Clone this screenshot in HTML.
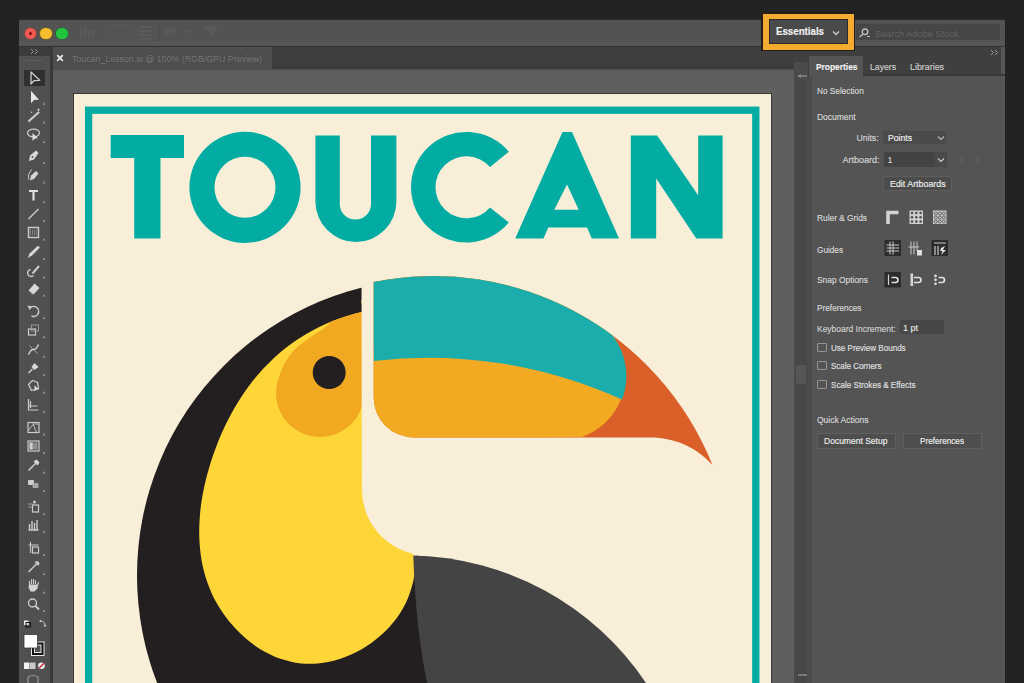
<!DOCTYPE html>
<html><head><meta charset="utf-8">
<style>
*{margin:0;padding:0;box-sizing:border-box}
html,body{width:1024px;height:683px;overflow:hidden;background:#212423;font-family:"Liberation Sans",sans-serif}
.a{position:absolute}
.tl{position:absolute;border-radius:50%}
.t{position:absolute;white-space:nowrap;line-height:1;-webkit-text-stroke:0.2px currentColor;text-shadow:0 0 1px rgba(0,0,0,.35)}
</style></head>
<body>
<div class="a" style="left:19px;top:19px;width:986px;height:664px;background:#535353;"></div>
<div class="a" style="left:19px;top:19px;width:986px;height:1px;background:#2b2b2b;"></div>
<div class="a" style="left:19px;top:41px;width:986px;height:4px;background:#575757;"></div>
<div class="a" style="left:19px;top:45.5px;width:986px;height:1.5px;background:#333333;"></div>
<div class="tl" style="left:24.5px;top:27.5px;width:11.5px;height:11.5px;background:#ee5a52;box-shadow:0 0 0 0.6px #a33a35"></div>
<div class="tl" style="left:28.5px;top:31.5px;width:3.5px;height:3.5px;background:#7b0a0a"></div>
<div class="tl" style="left:40.2px;top:27.5px;width:11.5px;height:11.5px;background:#f6bd30;box-shadow:0 0 0 0.6px #8e6a1a"></div>
<div class="tl" style="left:56px;top:27.5px;width:11.5px;height:11.5px;background:#23c43e;box-shadow:0 0 0 0.6px #1a7a2a"></div>
<svg class="a" style="left:0;top:0" width="240" height="46"><path d="M81,26 V38 M85,26 V38 M89,30 V38 M93,30 V38 M81,31 H95" stroke="#595959" stroke-width="2"/><rect x="112" y="25" width="16" height="13" fill="none" stroke="#595959" stroke-width="1.2"/><path d="M139,27 H152 M139,31 H152 M139,35 H152 M139,38.5 H152" stroke="#5a5a5a" stroke-width="2"/><path d="M158.5,24 V41" stroke="#4b4b4b" stroke-width="1.2"/><ellipse cx="170" cy="31" rx="6" ry="4.5" fill="#595959"/><path d="M184,31.5 H191" stroke="#595959" stroke-width="1.5"/><path d="M203,27 L218,25 L212,38 L210,32 Z" fill="#595959"/></svg>
<div class="a" style="left:19px;top:47px;width:986px;height:22px;background:#3f3f3f;"></div>
<div class="a" style="left:52px;top:47px;width:220px;height:22px;background:#4e4e4e;"></div>
<div class="a" style="left:272px;top:65.5px;width:536px;height:3.5px;background:#3a3a3a;"></div>
<svg class="a" style="left:56px;top:54px" width="8" height="8"><path d="M1.2,1.2 L6.8,6.8 M6.8,1.2 L1.2,6.8" stroke="#e8e8e8" stroke-width="1.8"/></svg>
<div class="a" style="left:19px;top:47px;width:31px;height:636px;background:#505050;"></div>
<div class="a" style="left:19px;top:47px;width:31px;height:9px;background:#3c3c3c;"></div>
<svg class="a" style="left:30px;top:48px" width="10" height="7"><path d="M1,1 L3.5,3.5 L1,6 M5,1 L7.5,3.5 L5,6" fill="none" stroke="#9a9a9a" stroke-width="1"/></svg>
<div class="a" style="left:26px;top:60px;width:17px;height:1px;background:#5c5c5c;"></div>
<div class="a" style="left:50px;top:47px;width:2.5px;height:636px;background:#393939;"></div>
<div class="a" style="left:52.5px;top:69px;width:741.5px;height:614px;background:#5f5f5f;"></div>
<div class="a" style="left:52.5px;top:69px;width:741.5px;height:2px;background:#555555;"></div>
<div class="a" style="left:73px;top:93px;width:699px;height:600px;background:#3d3a36;"></div>
<div class="a" style="left:74px;top:94px;width:696.8px;height:600px;background:#f9efd9;"></div>
<div class="a" style="left:794px;top:62px;width:14px;height:621px;background:#4a4a4a;"></div>
<div class="a" style="left:796px;top:80px;width:10px;height:603px;background:#474747;"></div>
<div class="a" style="left:796px;top:365px;width:10px;height:19px;background:#565656;border-radius:2px"></div>
<svg class="a" style="left:797px;top:73px" width="11" height="6"><path d="M1,3 H10" stroke="#8a8a8a" stroke-width="1.5"/><path d="M1,3 L4,1 L4,5 Z" fill="#8a8a8a"/></svg>
<svg class="a" style="left:797px;top:672px" width="11" height="6"><path d="M1,3 H10" stroke="#8a8a8a" stroke-width="1.5"/></svg>
<div class="a" style="left:808px;top:47px;width:197px;height:636px;background:#545454;"></div>
<div class="a" style="left:808px;top:47px;width:197px;height:29px;background:#3f3f3f;"></div>
<div class="a" style="left:808px;top:76px;width:4px;height:607px;background:#4b4b4b;"></div>
<div class="a" style="left:1000.5px;top:47px;width:4.5px;height:636px;background:#565656;"></div>
<div class="a" style="left:808px;top:73.5px;width:197px;height:2px;background:#393939;"></div>
<div class="a" style="left:809px;top:56px;width:54px;height:20px;background:#545454;"></div>
<svg class="a" style="left:990px;top:49px" width="10" height="7"><path d="M1,1 L3.5,3.5 L1,6 M5,1 L7.5,3.5 L5,6" fill="none" stroke="#9a9a9a" stroke-width="1"/></svg>
<div class="a" style="left:1005px;top:19px;width:19px;height:664px;background:#212423;"></div>
<div class="a" style="left:24px;top:70px;width:20.5px;height:15.5px;background:#2f2f2f"></div>
<svg class="a" style="left:0;top:0" width="60" height="683"><g transform="translate(33.5 77.5)"><path d="M-2.5,-5.5 L-2.5,6.5 L0.5,3.2 L6.2,2.8 Z" fill="none" stroke="#cbcbcb" stroke-width="1.3" stroke-linejoin="round"/></g><g transform="translate(33.5 96.8)"><path d="M-2.5,-6 L-2.5,6.5 L0.5,3.3 L5.5,3 Z" fill="#e6e6e6"/></g><path d="M42.5,104.8 L45,104.8 L45,102.3 Z" fill="#9a9a9a"/><g transform="translate(33.5 115.5)"><path d="M-4.5,5.5 L5,-3" stroke="#cbcbcb" stroke-width="2.2" stroke-linecap="round"/><path d="M-2.5,-4 L-1.5,-2.5 M5,-7 L5,-4.5 M3.8,-5.8 L6.2,-5.8" stroke="#cbcbcb" stroke-width="1"/></g><path d="M42.5,123.5 L45,123.5 L45,121.0 Z" fill="#9a9a9a"/><g transform="translate(33.5 135)"><ellipse cx="0" cy="-2" rx="6" ry="3.8" fill="none" stroke="#cbcbcb" stroke-width="1.3"/><path d="M-1,-2 L-1,6 L1.5,3.5 L4.5,3.3 Z" fill="#e0e0e0"/></g><path d="M42.5,143 L45,143 L45,140.5 Z" fill="#9a9a9a"/><g transform="translate(33.5 156)"><path d="M-4.5,5 L-3.5,-0.5 L2.5,-5.5 L5,-3 L0.5,3.5 Z" fill="#dadada"/><circle cx="-1" cy="1" r="1" fill="#535353"/></g><path d="M42.5,164 L45,164 L45,161.5 Z" fill="#9a9a9a"/><g transform="translate(33.5 175.5)"><path d="M-3.5,5 L-2.5,0 L2.5,-4.5 L5,-2 L0.5,3.5 Z" fill="#d6d6d6"/><path d="M-5,4 Q-6,-2 -2,-6" fill="none" stroke="#cbcbcb" stroke-width="1"/></g><path d="M42.5,183.5 L45,183.5 L45,181.0 Z" fill="#9a9a9a"/><g transform="translate(33.5 195)"><path d="M-4.5,-5 H4.5 V-3 H1.1 V5.5 H-1.1 V-3 H-4.5 Z" fill="#e0e0e0"/></g><path d="M42.5,203 L45,203 L45,200.5 Z" fill="#9a9a9a"/><g transform="translate(33.5 214)"><path d="M-5,5 L5,-5" stroke="#cbcbcb" stroke-width="1.4"/></g><path d="M42.5,222 L45,222 L45,219.5 Z" fill="#9a9a9a"/><g transform="translate(33.5 232.5)"><rect x="-5" y="-5" width="10" height="10" fill="none" stroke="#cbcbcb" stroke-width="1.4"/><path d="M-3,-3 V3 M-1,-3 V3 M1,-3 V3 M3,-3 V3" stroke="#8a8a8a" stroke-width="0.8"/></g><path d="M42.5,240.5 L45,240.5 L45,238.0 Z" fill="#9a9a9a"/><g transform="translate(33.5 252)"><path d="M-5.5,6 L-4.2,1.8 L3.5,-5.5 Q5.8,-6.8 6.2,-4.3 L-1.2,3.2 Z" fill="#d6d6d6"/></g><path d="M42.5,260 L45,260 L45,257.5 Z" fill="#9a9a9a"/><g transform="translate(33.5 270.5)"><path d="M-3,-1 A3.5,3.5 0 1 0 0,5" fill="none" stroke="#cbcbcb" stroke-width="1.4"/><path d="M-1,3 L5.5,-4.5" stroke="#cbcbcb" stroke-width="2"/></g><path d="M42.5,278.5 L45,278.5 L45,276.0 Z" fill="#9a9a9a"/><g transform="translate(33.5 288.5)"><path d="M-5,2 L1,-5 L6,-0.5 L0,6 Z" fill="#d8d8d8"/><path d="M-5,2 L0,6 L-2,6 Z" fill="#777"/></g><path d="M42.5,296.5 L45,296.5 L45,294.0 Z" fill="#9a9a9a"/><g transform="translate(33.5 311)"><path d="M-3.5,-3 A5,5 0 1 1 -2,5" fill="none" stroke="#cbcbcb" stroke-width="1.5"/><path d="M-6,-5.5 L-1,-4.5 L-4,-1 Z" fill="#cbcbcb"/></g><path d="M42.5,319 L45,319 L45,316.5 Z" fill="#9a9a9a"/><g transform="translate(33.5 330)"><rect x="-5" y="-1" width="7" height="6" fill="none" stroke="#cbcbcb" stroke-width="1.2"/><rect x="-2" y="-5" width="7" height="6" fill="none" stroke="#9a9a9a" stroke-width="1"/></g><path d="M42.5,338 L45,338 L45,335.5 Z" fill="#9a9a9a"/><g transform="translate(33.5 349.5)"><path d="M-5,5 Q-2,-1 0,0 Q2,1 5,-5" fill="none" stroke="#cbcbcb" stroke-width="1.6"/><path d="M-4,-4 L-1,-1 M4,4 L1,1" stroke="#aaa" stroke-width="1"/></g><path d="M42.5,357.5 L45,357.5 L45,355.0 Z" fill="#9a9a9a"/><g transform="translate(33.5 368)"><path d="M-5,5 L-1,1" stroke="#cbcbcb" stroke-width="1.4"/><path d="M-2,-1 L1,-5 L5,-1 L1,2 Z" fill="#d8d8d8"/></g><path d="M42.5,376 L45,376 L45,373.5 Z" fill="#9a9a9a"/><g transform="translate(33.5 385.5)"><path d="M-5,-1 L-1,-5 L4,-3 L5,3 L-2,5 Z" fill="none" stroke="#cbcbcb" stroke-width="1.3"/><path d="M1,0 L1,6 L3,4 L5.5,4 Z" fill="#e0e0e0"/></g><path d="M42.5,393.5 L45,393.5 L45,391.0 Z" fill="#9a9a9a"/><g transform="translate(33.5 405)"><path d="M-5,-6 V5 H5 M-3,-4 V3 M-5,1 L4,1" fill="none" stroke="#cbcbcb" stroke-width="1.2"/></g><path d="M42.5,413 L45,413 L45,410.5 Z" fill="#9a9a9a"/><g transform="translate(33.5 427.5)"><rect x="-5.5" y="-5" width="11" height="10" fill="none" stroke="#cbcbcb" stroke-width="1.2"/><path d="M-5,3 Q0,-6 5,-3 M-1,-5 L3,5" fill="none" stroke="#bdbdbd" stroke-width="1"/></g><path d="M42.5,435.5 L45,435.5 L45,433.0 Z" fill="#9a9a9a"/><g transform="translate(33.5 446)"><rect x="-5.5" y="-5" width="11" height="10" fill="none" stroke="#cbcbcb" stroke-width="1.2"/><rect x="-4" y="-3.5" width="8" height="7" fill="#8d8d8d"/><rect x="-4" y="-3.5" width="3" height="7" fill="#cfcfcf"/></g><path d="M42.5,454 L45,454 L45,451.5 Z" fill="#9a9a9a"/><g transform="translate(33.5 465.5)"><path d="M-5,5 L2,-2" stroke="#cbcbcb" stroke-width="1.6"/><path d="M0,-4 L3,-6 L6,-3 L4,0 Z" fill="#d8d8d8"/></g><path d="M42.5,473.5 L45,473.5 L45,471.0 Z" fill="#9a9a9a"/><g transform="translate(33.5 484)"><rect x="-5.5" y="-4" width="6" height="5" rx="1" fill="#cfcfcf"/><rect x="-1" y="-1" width="6" height="5" rx="1" fill="#a8a8a8"/></g><path d="M42.5,492 L45,492 L45,489.5 Z" fill="#9a9a9a"/><g transform="translate(33.5 507)"><path d="M-5,-3 L-1,-3 M-5,0 L-2,0" stroke="#aaa" stroke-width="1"/><rect x="-1" y="-2" width="6" height="7" fill="none" stroke="#cbcbcb" stroke-width="1.2"/><circle cx="1" cy="-5" r="1.5" fill="#ccc"/></g><path d="M42.5,515 L45,515 L45,512.5 Z" fill="#9a9a9a"/><g transform="translate(33.5 525)"><path d="M-5,5 H5 M-4,5 V-1 M-1.5,5 V-4 M1,5 V-2 M3.5,5 V-5" stroke="#cbcbcb" stroke-width="1.4"/></g><path d="M42.5,533 L45,533 L45,530.5 Z" fill="#9a9a9a"/><g transform="translate(33.5 548)"><path d="M-5,-3 H5 M-3,-6 V5" stroke="#cbcbcb" stroke-width="1.1"/><rect x="-1" y="-1" width="6" height="6" fill="none" stroke="#cbcbcb" stroke-width="1.2"/></g><path d="M42.5,556 L45,556 L45,553.5 Z" fill="#9a9a9a"/><g transform="translate(33.5 567)"><path d="M-5,5 L3,-3" stroke="#cbcbcb" stroke-width="1.6"/><path d="M1,-5 L4,-6 L6,-4 L5,-1 Z" fill="#d0d0d0"/></g><path d="M42.5,575 L45,575 L45,572.5 Z" fill="#9a9a9a"/><g transform="translate(33.5 585.5)"><path d="M-4,-1 L-4,-4 M-2,-2 L-2,-6 M0,-2 L0,-6 M2,-2 L2,-5 M4,0 L5,-3" stroke="#cbcbcb" stroke-width="1.2" stroke-linecap="round"/><path d="M-4.5,-1 L4.5,-1 L4,3 L1,6 L-3,6 L-5,2 Z" fill="#d4d4d4"/></g><path d="M42.5,593.5 L45,593.5 L45,591.0 Z" fill="#9a9a9a"/><g transform="translate(33.5 604)"><circle cx="-1" cy="-1" r="4" fill="none" stroke="#cbcbcb" stroke-width="1.4"/><path d="M2,2 L5.5,5.5" stroke="#cbcbcb" stroke-width="2"/></g><path d="M42.5,612 L45,612 L45,609.5 Z" fill="#9a9a9a"/><rect x="24" y="620.5" width="4.5" height="4.5" fill="#eee"/><rect x="26" y="622.5" width="4.5" height="4.5" fill="none" stroke="#111" stroke-width="1"/><path d="M40,621 Q45,621 45,626" fill="none" stroke="#c8c8c8" stroke-width="1"/><path d="M39,621 L41,619.5 L41,622.5Z M45,627 L43.5,625 L46.5,625Z" fill="#c8c8c8"/><rect x="31.5" y="642" width="12.5" height="13.5" fill="#111" stroke="#e8e8e8" stroke-width="1"/><rect x="34.5" y="645" width="6.5" height="7.5" fill="#535353" stroke="#e8e8e8" stroke-width="1"/><rect x="24" y="634.5" width="13.5" height="13.5" fill="#ffffff" stroke="#3a3a3a" stroke-width="0.8"/><rect x="24" y="662.5" width="5.5" height="6.5" fill="#f2f2f2"/><rect x="30" y="662.5" width="5.5" height="6.5" fill="#c9c9c9"/><circle cx="41.5" cy="665.7" r="3.3" fill="#f5f5f5"/><path d="M39.2,668 L43.8,663.4" stroke="#d62a2a" stroke-width="1.5"/><path d="M28,683 L28,677 Q33,674 38,677 L38,683" fill="none" stroke="#9a9a9a" stroke-width="1.2"/></svg>
<!-- artwork -->
<svg class="a" style="left:0;top:0" width="1024" height="683" viewBox="0 0 1024 683">
<defs>
<clipPath id="ab"><rect x="74" y="94" width="696.8" height="600"/></clipPath>
<clipPath id="yc"><path id="ypath" d="M362.6,311.7 C360.6,312.2 354.4,313.7 350.5,314.9 C346.6,316.1 342.7,317.3 338.9,318.7 C335.1,320.1 331.4,321.4 327.8,323.0 C324.2,324.6 320.6,326.2 317.2,328.0 C313.8,329.8 310.4,331.6 307.1,333.5 C303.8,335.4 300.5,337.4 297.4,339.5 C294.2,341.6 291.2,343.8 288.2,346.1 C285.2,348.4 282.3,350.7 279.5,353.1 C276.7,355.5 273.9,358.1 271.2,360.7 C268.5,363.3 265.9,365.9 263.4,368.6 C260.9,371.3 258.4,374.1 256.0,377.0 C253.6,379.9 251.3,382.8 249.1,385.8 C246.9,388.8 244.7,391.9 242.6,395.0 C240.5,398.1 238.5,401.3 236.6,404.5 C234.7,407.7 232.7,411.0 230.9,414.4 C229.1,417.8 227.4,421.2 225.7,424.6 C224.0,428.1 222.4,431.6 220.9,435.1 C219.4,438.7 217.9,442.2 216.5,445.9 C215.1,449.5 213.8,453.3 212.5,457.0 C211.2,460.7 210.1,464.4 209.0,468.2 C207.9,472.0 206.8,475.8 205.9,479.6 C205.0,483.4 204.1,487.3 203.3,491.2 C202.5,495.1 201.9,498.9 201.3,502.8 C200.8,506.7 200.3,510.5 200.0,514.4 C199.7,518.3 199.4,522.2 199.3,526.1 C199.2,530.0 199.2,533.8 199.3,537.6 C199.4,541.4 199.7,545.3 200.1,549.1 C200.5,552.9 200.9,556.7 201.6,560.4 C202.2,564.1 203.1,567.9 204.0,571.5 C204.9,575.1 206.1,578.7 207.3,582.3 C208.6,585.9 209.9,589.4 211.5,592.9 C213.1,596.4 214.8,599.8 216.7,603.1 C218.6,606.4 220.6,609.6 222.8,612.8 C225.0,616.0 227.3,619.1 229.7,622.1 C232.1,625.1 234.7,627.9 237.4,630.6 C240.1,633.3 242.9,635.9 245.8,638.4 C248.7,640.9 251.7,643.2 254.8,645.4 C257.9,647.6 261.1,649.6 264.3,651.4 C267.6,653.2 270.9,654.9 274.3,656.4 C277.7,657.9 281.3,659.0 284.8,660.1 C288.3,661.2 291.9,662.1 295.5,662.7 C299.1,663.3 302.9,663.7 306.6,663.8 C310.3,663.9 314.1,663.8 317.8,663.5 C321.6,663.2 325.4,662.6 329.1,661.8 C332.9,661.0 336.6,660.0 340.3,658.8 C344.0,657.6 347.6,656.1 351.2,654.5 C354.8,652.9 358.3,651.2 361.7,649.2 C365.1,647.2 368.5,645.0 371.7,642.7 C374.9,640.4 377.9,637.9 380.9,635.3 C383.8,632.7 386.8,630.0 389.4,627.1 C392.0,624.2 394.5,621.2 396.8,618.1 C399.1,615.0 401.1,611.6 403.0,608.3 C404.9,604.9 406.6,601.5 408.0,598.0 C409.4,594.5 410.6,590.9 411.7,587.2 C412.8,583.6 413.6,579.9 414.3,576.1 C415.0,572.3 415.5,568.4 415.8,564.6 C416.1,560.8 416.4,557.0 416.4,553.1 C416.4,549.2 416.3,545.3 416.0,541.4 C415.7,537.5 415.0,531.8 414.8,529.9 L416,300 L361.5,300 Z"/></clipPath>
<clipPath id="bk"><path d="M373.7,282 A301,301 0 0 1 712.5,465 Q690,440 655,437.4 L413.7,437.4 A40,40 0 0 1 373.7,397.4 Z"/></clipPath>
</defs>
<g clip-path="url(#ab)">
<rect x="88.6" y="110.2" width="667.2" height="700" fill="none" stroke="#03aca2" stroke-width="7.3"/>
<g fill="#03aca2">
<path d="M110.7,135 H184 V158.1 H160.5 V238.5 H134.2 V158.1 H110.7 Z"/>
<path fill-rule="evenodd" d="M245,131.7 A55.6,55.6 0 1 1 245,242.9 A55.6,55.6 0 1 1 245,131.7 Z M245,156.8 A30.5,30.5 0 1 0 245,217.8 A30.5,30.5 0 1 0 245,156.8 Z"/>
<path d="M315.4,135.5 H339.8 V204 A15.6,15.6 0 0 0 371,204 V135.5 H396.4 V201.5 A40.5,40.5 0 0 1 315.4,201.5 Z"/>
<path d="M508.8,151.8 A55.3,55.3 0 1 0 508.8,222.6 L490,207.5 A31,31 0 1 1 490,167.1 Z"/>
<path fill-rule="evenodd" d="M515.2,238.5 L562.5,132 H572 L619,238.5 H591.8 L587,227.4 H548.3 L543.5,238.5 Z M567,184.5 L578.7,209.8 H554.3 Z"/>
<path d="M630.8,135.5 H657.2 L698.2,195.2 V135.5 H722.6 V238.5 H696.3 L656.2,178.6 V238.5 H630.8 Z"/>
</g>
<circle cx="433.8" cy="575.5" r="296.8" fill="#231f20"/>
<path d="M362.6,311.7 C360.6,312.2 354.4,313.7 350.5,314.9 C346.6,316.1 342.7,317.3 338.9,318.7 C335.1,320.1 331.4,321.4 327.8,323.0 C324.2,324.6 320.6,326.2 317.2,328.0 C313.8,329.8 310.4,331.6 307.1,333.5 C303.8,335.4 300.5,337.4 297.4,339.5 C294.2,341.6 291.2,343.8 288.2,346.1 C285.2,348.4 282.3,350.7 279.5,353.1 C276.7,355.5 273.9,358.1 271.2,360.7 C268.5,363.3 265.9,365.9 263.4,368.6 C260.9,371.3 258.4,374.1 256.0,377.0 C253.6,379.9 251.3,382.8 249.1,385.8 C246.9,388.8 244.7,391.9 242.6,395.0 C240.5,398.1 238.5,401.3 236.6,404.5 C234.7,407.7 232.7,411.0 230.9,414.4 C229.1,417.8 227.4,421.2 225.7,424.6 C224.0,428.1 222.4,431.6 220.9,435.1 C219.4,438.7 217.9,442.2 216.5,445.9 C215.1,449.5 213.8,453.3 212.5,457.0 C211.2,460.7 210.1,464.4 209.0,468.2 C207.9,472.0 206.8,475.8 205.9,479.6 C205.0,483.4 204.1,487.3 203.3,491.2 C202.5,495.1 201.9,498.9 201.3,502.8 C200.8,506.7 200.3,510.5 200.0,514.4 C199.7,518.3 199.4,522.2 199.3,526.1 C199.2,530.0 199.2,533.8 199.3,537.6 C199.4,541.4 199.7,545.3 200.1,549.1 C200.5,552.9 200.9,556.7 201.6,560.4 C202.2,564.1 203.1,567.9 204.0,571.5 C204.9,575.1 206.1,578.7 207.3,582.3 C208.6,585.9 209.9,589.4 211.5,592.9 C213.1,596.4 214.8,599.8 216.7,603.1 C218.6,606.4 220.6,609.6 222.8,612.8 C225.0,616.0 227.3,619.1 229.7,622.1 C232.1,625.1 234.7,627.9 237.4,630.6 C240.1,633.3 242.9,635.9 245.8,638.4 C248.7,640.9 251.7,643.2 254.8,645.4 C257.9,647.6 261.1,649.6 264.3,651.4 C267.6,653.2 270.9,654.9 274.3,656.4 C277.7,657.9 281.3,659.0 284.8,660.1 C288.3,661.2 291.9,662.1 295.5,662.7 C299.1,663.3 302.9,663.7 306.6,663.8 C310.3,663.9 314.1,663.8 317.8,663.5 C321.6,663.2 325.4,662.6 329.1,661.8 C332.9,661.0 336.6,660.0 340.3,658.8 C344.0,657.6 347.6,656.1 351.2,654.5 C354.8,652.9 358.3,651.2 361.7,649.2 C365.1,647.2 368.5,645.0 371.7,642.7 C374.9,640.4 377.9,637.9 380.9,635.3 C383.8,632.7 386.8,630.0 389.4,627.1 C392.0,624.2 394.5,621.2 396.8,618.1 C399.1,615.0 401.1,611.6 403.0,608.3 C404.9,604.9 406.6,601.5 408.0,598.0 C409.4,594.5 410.6,590.9 411.7,587.2 C412.8,583.6 413.6,579.9 414.3,576.1 C415.0,572.3 415.5,568.4 415.8,564.6 C416.1,560.8 416.4,557.0 416.4,553.1 C416.4,549.2 416.3,545.3 416.0,541.4 C415.7,537.5 415.0,531.8 414.8,529.9 L416,300 L361.5,300 Z" fill="#fed637"/>
<g clip-path="url(#yc)">
<path d="M278.2,379.3 A44,44 0 1 0 364,394.3 L364,300 L340,300 L332,320 C330.8,321.2 329.1,324.3 325.0,327.5 C320.9,330.7 312.7,335.4 307.6,339.2 C302.5,342.9 298.2,345.8 294.3,350.0 C290.4,354.2 286.7,359.7 284.0,364.6 C281.3,369.5 279.2,376.9 278.2,379.3 Z" fill="#f1a922"/>
</g>
<circle cx="329.2" cy="372.5" r="16.5" fill="#231f20"/>
<path d="M361.5,260 H751 V700 H646 A288,288 0 0 0 413,555.5 L413,553.7 A66,66 0 0 1 361.9,489.4 Z" fill="#f9efd9"/>
<path d="M413.3,555.5 A288,288 0 0 1 646,683 L650,700 L431,700 Q416,640 413.3,555.5 Z" fill="#444444"/>
<g clip-path="url(#bk)">
<rect x="360" y="260" width="400" height="220" fill="#db5f29"/>
<path d="M370,260 L600,260 L612.3,335.3 A66,66 0 0 1 581.7,437.2 L370,441 Z" fill="#f2aa22"/>
<path d="M370,260 L600,260 L612.3,335.3 A66,66 0 0 1 622,399.6 A467.6,467.6 0 0 0 373.7,360.9 Z" fill="#1aadab"/>
</g>
</g>
</svg>
<div class="a" style="left:761px;top:12px;width:94px;height:39px;background:#231d14;"></div>
<div class="a" style="left:762.5px;top:13.5px;width:91px;height:36px;background:#f4ab2f;"></div>
<div class="a" style="left:768.5px;top:19px;width:79px;height:25px;background:#2e2a26;"></div>
<div class="a" style="left:769.5px;top:20px;width:77px;height:23px;background:#4a4a4a;"></div>
<svg class="a" style="left:832px;top:30px" width="8" height="6"><path d="M1,1.5 L4,4.5 L7,1.5" fill="none" stroke="#cfcfcf" stroke-width="1.3"/></svg>
<div class="a" style="left:856px;top:23.5px;width:144px;height:16px;background:#464646;"></div>
<svg class="a" style="left:857px;top:27px" width="16" height="12"><circle cx="8" cy="4.8" r="2.8" fill="none" stroke="#bdbdbd" stroke-width="1.4"/><path d="M6,7 L2.5,10" stroke="#bdbdbd" stroke-width="1.6"/><path d="M10,9.5 L13,9.5" stroke="#bdbdbd" stroke-width="1"/></svg>
<div class="a" style="left:883px;top:130.5px;width:63px;height:13.5px;background:#4b4b4b;"></div>
<svg class="a" style="left:937px;top:135px" width="8" height="6"><path d="M1,1.5 L4,4.5 L7,1.5" fill="none" stroke="#bbbbbb" stroke-width="1.1"/></svg>
<div class="a" style="left:884px;top:152px;width:49.5px;height:14.5px;background:#434343;"></div>
<div class="a" style="left:934px;top:152px;width:13px;height:14.5px;background:#4a4a4a;"></div>
<svg class="a" style="left:937px;top:157px" width="8" height="6"><path d="M1,1.5 L4,4.5 L7,1.5" fill="none" stroke="#cccccc" stroke-width="1.2"/></svg>
<svg class="a" style="left:958px;top:155px" width="24" height="10"><path d="M5,2 L2.5,5 L5,8" fill="none" stroke="#6a6a6a" stroke-width="1"/><path d="M19,2 L21.5,5 L19,8" fill="none" stroke="#6a6a6a" stroke-width="1"/></svg>
<div class="a" style="left:883px;top:175.5px;width:69px;height:15.5px;background:#4c4c4c;border:1px solid #5e5e5e;border-radius:1px"></div>
<div class="a" style="left:900px;top:320px;width:44px;height:14px;background:#474747;"></div>
<div class="a" style="left:817px;top:342.5px;width:9.6px;height:9.6px;background:transparent;border:1px solid #959595;border-radius:1px"></div>
<div class="a" style="left:817px;top:360.59999999999997px;width:9.6px;height:9.6px;background:transparent;border:1px solid #959595;border-radius:1px"></div>
<div class="a" style="left:817px;top:379.9px;width:9.6px;height:9.6px;background:transparent;border:1px solid #959595;border-radius:1px"></div>
<div class="a" style="left:816.5px;top:432.5px;width:79px;height:16px;background:#4e4e4e;border:1px solid #5f5f5f"></div>
<div class="a" style="left:903px;top:432.5px;width:79px;height:16px;background:#4e4e4e;border:1px solid #5f5f5f"></div>
<div class="t" style="left:776px;top:27.0px;font-size:10.4px;color:#f2f2f2;font-weight:bold;transform:scaleX(0.934);transform-origin:0 0">Essentials</div>
<div class="t" style="left:875px;top:28.6px;font-size:9.6px;color:#656565;font-weight:normal;transform:scaleX(0.962);transform-origin:0 0">Search Adobe Stock</div>
<div class="t" style="left:816px;top:62.4px;font-size:9.6px;color:#f4f4f4;font-weight:bold;transform:scaleX(0.874);transform-origin:0 0">Properties</div>
<div class="t" style="left:869.6px;top:62.4px;font-size:9.6px;color:#cdcdcd;font-weight:normal;transform:scaleX(0.903);transform-origin:0 0">Layers</div>
<div class="t" style="left:910px;top:62.4px;font-size:9.6px;color:#cdcdcd;font-weight:normal;transform:scaleX(0.924);transform-origin:0 0">Libraries</div>
<div class="t" style="left:72px;top:53.9px;font-size:9.6px;color:#767676;font-weight:normal;transform:scaleX(0.918);transform-origin:0 0">Toucan_Lesson.ai @ 100% (RGB/GPU Preview)</div>
<div class="t" style="left:817px;top:85.9px;font-size:9.6px;color:#dadada;font-weight:normal;transform:scaleX(0.860);transform-origin:0 0">No Selection</div>
<div class="t" style="left:817px;top:112.2px;font-size:9.6px;color:#dadada;font-weight:normal;transform:scaleX(0.883);transform-origin:0 0">Document</div>
<div class="t" style="left:854.46875px;top:133.1px;font-size:9.6px;color:#dadada;font-weight:normal;transform:scaleX(0.897);transform-origin:24.5px 0">Units:</div>
<div class="t" style="left:888px;top:133.1px;font-size:9.6px;color:#f2f2f2;font-weight:normal;transform:scaleX(0.900);transform-origin:0 0">Points</div>
<div class="t" style="left:839.53125px;top:155.2px;font-size:9.6px;color:#dadada;font-weight:normal;transform:scaleX(0.937);transform-origin:39.5px 0">Artboard:</div>
<div class="t" style="left:888px;top:155.2px;font-size:9.6px;color:#e6e6e6;font-weight:normal;transform:scaleX(0.749);transform-origin:0 0">1</div>
<div class="t" style="left:890px;top:178.7px;font-size:9.6px;color:#efefef;font-weight:normal;transform:scaleX(0.923);transform-origin:0 0">Edit Artboards</div>
<div class="t" style="left:817px;top:213.0px;font-size:9.6px;color:#dadada;font-weight:normal;transform:scaleX(0.868);transform-origin:0 0">Ruler &amp; Grids</div>
<div class="t" style="left:817px;top:244.7px;font-size:9.6px;color:#dadada;font-weight:normal;transform:scaleX(0.855);transform-origin:0 0">Guides</div>
<div class="t" style="left:817px;top:275.4px;font-size:9.6px;color:#dadada;font-weight:normal;transform:scaleX(0.877);transform-origin:0 0">Snap Options</div>
<div class="t" style="left:817px;top:303.2px;font-size:9.6px;color:#dadada;font-weight:normal;transform:scaleX(0.860);transform-origin:0 0">Preferences</div>
<div class="t" style="left:817px;top:324.1px;font-size:9.6px;color:#d2d2d2;font-weight:normal;transform:scaleX(0.883);transform-origin:0 0">Keyboard Increment:</div>
<div class="t" style="left:903px;top:322.9px;font-size:9.6px;color:#e6e6e6;font-weight:normal;transform:scaleX(0.937);transform-origin:0 0">1 pt</div>
<div class="t" style="left:831px;top:342.7px;font-size:9.6px;color:#e0e0e0;font-weight:normal;transform:scaleX(0.838);transform-origin:0 0">Use Preview Bounds</div>
<div class="t" style="left:831px;top:360.8px;font-size:9.6px;color:#e0e0e0;font-weight:normal;transform:scaleX(0.831);transform-origin:0 0">Scale Corners</div>
<div class="t" style="left:831px;top:380.1px;font-size:9.6px;color:#e0e0e0;font-weight:normal;transform:scaleX(0.844);transform-origin:0 0">Scale Strokes &amp; Effects</div>
<div class="t" style="left:817px;top:415.2px;font-size:9.6px;color:#dadada;font-weight:normal;transform:scaleX(0.886);transform-origin:0 0">Quick Actions</div>
<div class="t" style="left:824px;top:435.9px;font-size:9.6px;color:#efefef;font-weight:normal;transform:scaleX(0.887);transform-origin:0 0">Document Setup</div>
<div class="t" style="left:920px;top:435.9px;font-size:9.6px;color:#efefef;font-weight:normal;transform:scaleX(0.850);transform-origin:0 0">Preferences</div>
<svg class="a" style="left:0;top:0" width="1024" height="683"><path d="M888,224 V212.5 H898.5" fill="none" stroke="#d2d2d2" stroke-width="3.6"/><rect x="909.5" y="210.5" width="13.5" height="13.5" fill="#cfcfcf"/><circle cx="912.0" cy="213.0" r="1.3" fill="#505050"/><circle cx="912.0" cy="217.3" r="1.3" fill="#505050"/><circle cx="912.0" cy="221.6" r="1.3" fill="#505050"/><circle cx="916.3" cy="213.0" r="1.3" fill="#505050"/><circle cx="916.3" cy="217.3" r="1.3" fill="#505050"/><circle cx="916.3" cy="221.6" r="1.3" fill="#505050"/><circle cx="920.6" cy="213.0" r="1.3" fill="#505050"/><circle cx="920.6" cy="217.3" r="1.3" fill="#505050"/><circle cx="920.6" cy="221.6" r="1.3" fill="#505050"/><rect x="933" y="210.5" width="13.5" height="13.5" fill="#c9c9c9"/><circle cx="935.8" cy="213.5" r="1.5" fill="none" stroke="#555" stroke-width="0.9"/><circle cx="935.8" cy="217.5" r="1.5" fill="none" stroke="#555" stroke-width="0.9"/><circle cx="935.8" cy="221.5" r="1.5" fill="none" stroke="#555" stroke-width="0.9"/><circle cx="939.8" cy="213.5" r="1.5" fill="none" stroke="#555" stroke-width="0.9"/><circle cx="939.8" cy="217.5" r="1.5" fill="none" stroke="#555" stroke-width="0.9"/><circle cx="939.8" cy="221.5" r="1.5" fill="none" stroke="#555" stroke-width="0.9"/><circle cx="943.8" cy="213.5" r="1.5" fill="none" stroke="#555" stroke-width="0.9"/><circle cx="943.8" cy="217.5" r="1.5" fill="none" stroke="#555" stroke-width="0.9"/><circle cx="943.8" cy="221.5" r="1.5" fill="none" stroke="#555" stroke-width="0.9"/><rect x="884.5" y="240" width="16.5" height="16" fill="#2c2c2c"/><path d="M890,241.5 V254.5 M893,241.5 V254.5 M886.5,245 H899 M886.5,248 H899 M886.5,251 H899" stroke="#c8c8c8" stroke-width="1"/><path d="M911,241.5 V254.5 M914,241.5 V254.5 M917,241.5 V251 M908.5,247 H919" stroke="#c8c8c8" stroke-width="1"/><rect x="917" y="250" width="5" height="5.5" fill="#dedede"/><rect x="931.5" y="240" width="16.5" height="16" fill="#2c2c2c"/><path d="M934,243 H946 M935,246 V255 M938,246 V255" stroke="#c8c8c8" stroke-width="1.2"/><path d="M941,248 L945,246 L943,250 L946,250 L941,255 L942.5,251 L940,251 Z" fill="#e0e0e0"/><rect x="884.5" y="272" width="16.5" height="15.5" fill="#2c2c2c"/><path d="M888.5,274.5 V285" stroke="#d0d0d0" stroke-width="1.2"/><path d="M891.5,277.5 H895.5 A2.5,2.5 0 0 1 895.5,282.5 H891.5" fill="none" stroke="#e0e0e0" stroke-width="1.6"/><path d="M911.8,273.5 V286" stroke="#d6d6d6" stroke-width="2.6"/><path d="M914,277.5 H918.5 A2.5,2.5 0 0 1 918.5,282.5 H914" fill="none" stroke="#e0e0e0" stroke-width="1.6"/><circle cx="935.5" cy="276" r="1.4" fill="#d8d8d8"/><circle cx="935.5" cy="279.8" r="1.4" fill="#d8d8d8"/><circle cx="935.5" cy="283.8" r="1.4" fill="#d8d8d8"/><path d="M938.5,277.5 H942 A2.5,2.5 0 0 1 942,282.5 H938.5" fill="none" stroke="#e0e0e0" stroke-width="1.6"/></svg>
</body></html>
